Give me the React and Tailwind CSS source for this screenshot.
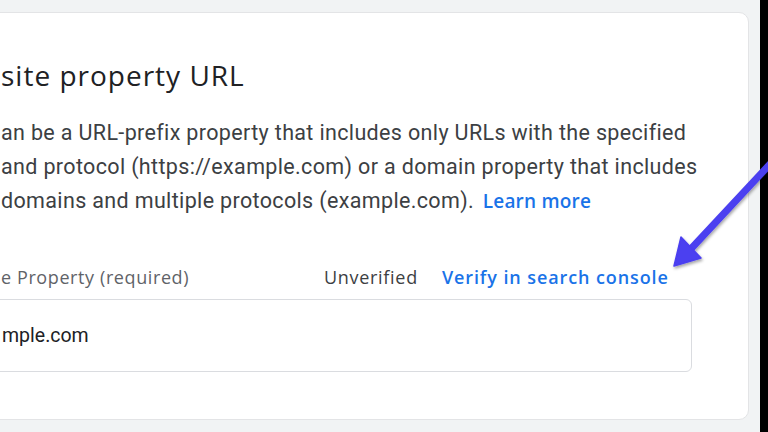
export default function App() {
  return (
    <div className="relative flex w-[768px] h-[432px] overflow-hidden bg-[#f1f3f4]" style={{ fontFamily: "Roboto, 'Liberation Sans', sans-serif" }}>
      <div className="ml-[-40px] mt-[12px] h-[408px] w-[789px] shrink-0 rounded-[10px] border border-[#e3e4e6] bg-white pl-[40px]">
        <div className="mt-[44px] text-[28px] leading-[36px] tracking-[1px] text-[#202124]" style={{ fontFamily: "'Open Sans', Roboto, sans-serif" }}>site property URL</div>
        <div className="mt-[23px] text-[21.5px] leading-[34px] tracking-[0.35px] text-[#3c4043]">
          <div>an be a URL-prefix property that includes only URLs with the specified</div>
          <div>and protocol (https://example.com) or a domain property that includes</div>
          <div>
            domains and multiple protocols (example.com).{" "}
            <span className="ml-[3px] font-semibold tracking-[0.2px] text-[#1a73e8] text-[19px]" style={{ fontFamily: "'Open Sans', Roboto, sans-serif" }}>Learn more</span>
          </div>
        </div>
        <div className="mt-[47px] flex items-center text-[18px] leading-[24px] text-[#5f6368]" style={{ fontFamily: "'Open Sans', Roboto, sans-serif" }}>
          <div className="w-[323px] tracking-[0.6px]">e Property (required)</div>
          <div className="tracking-[0.7px] text-[#3c4043]">Unverified</div>
          <div className="ml-[24px] font-semibold tracking-[0.9px] text-[#1a73e8]">Verify in search console</div>
        </div>
        <div className="mt-[10px] flex h-[73px] w-[731px] ml-[-40px] items-center rounded-[6px] border border-[#dadce0] pl-[40px] text-[19.5px] text-[#202124]">
          mple.com
        </div>
      </div>
      <div className="absolute left-[760px] top-0 h-[432px] w-[8px]" style={{ backgroundColor: "#000000" }} />
      <svg className="absolute left-0 top-0" width="768" height="432" viewBox="0 0 768 432">
        <defs>
          <filter id="sh" x="-20%" y="-20%" width="140%" height="140%">
            <feDropShadow dx="1" dy="2" stdDeviation="1.5" floodColor="#000" floodOpacity="0.35" />
          </filter>
        </defs>
        <rect x="761" y="0" width="7" height="432" fill="#000" />
        <g filter="url(#sh)" fill="#4b3ff0" stroke="#4b3ff0">
          <line x1="772" y1="162" x2="688" y2="252" strokeWidth="7" strokeLinecap="round" />
          <polygon points="674,266 681,237 701,258" strokeWidth="1.5" strokeLinejoin="round" />
        </g>
      </svg>
    </div>
  );
}
